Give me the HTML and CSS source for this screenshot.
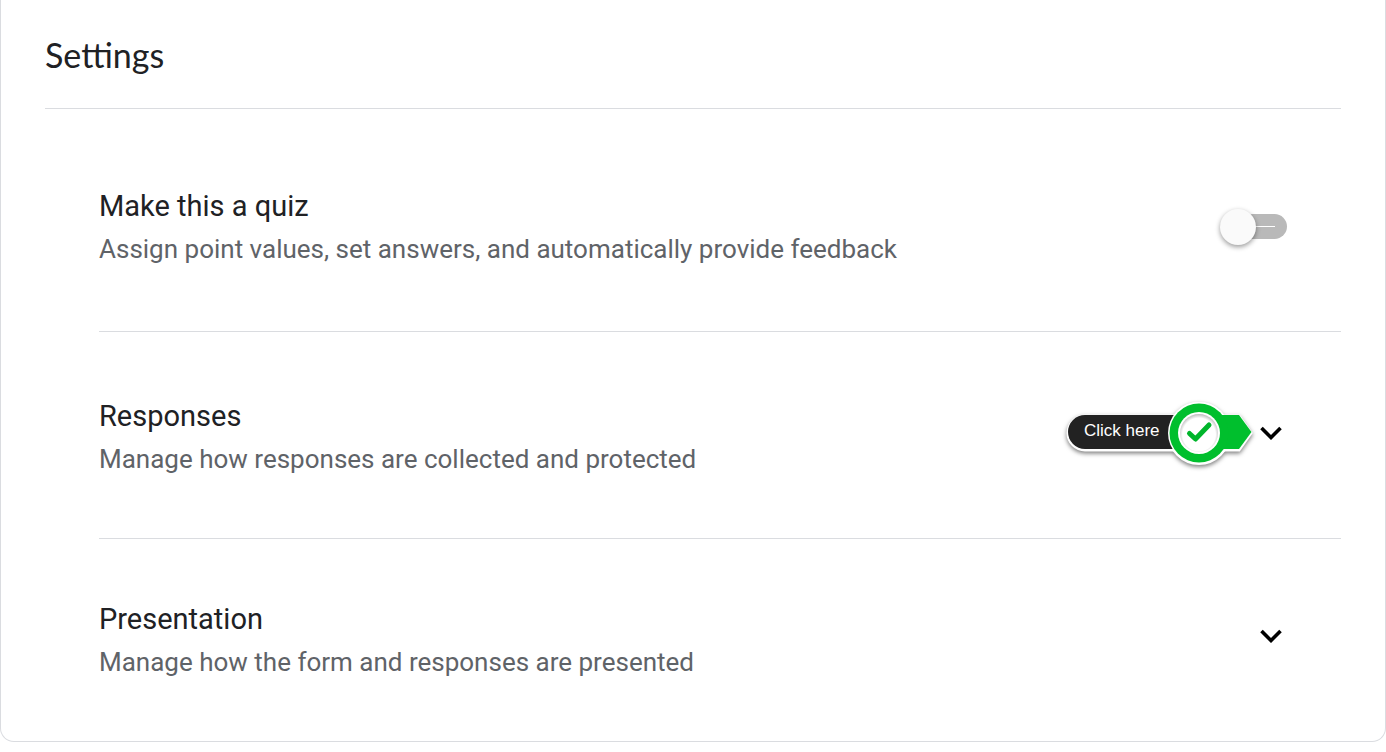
FILE: index.html
```html
<!DOCTYPE html>
<html lang="en">
<head>
<meta charset="utf-8">
<meta name="viewport" content="width=device-width, initial-scale=1">
<title>Settings</title>
<link rel="stylesheet" href="styles.css">
</head>
<body>
<main class="card">
  <header class="card-header"><h1 class="card-title">Settings</h1></header>
  <section class="setting setting-quiz">
    <div class="setting-text">
      <h2 class="setting-title"><label for="quiz">Make this a quiz</label></h2>
      <p class="setting-note" id="quiz-note">Assign point values, set answers, and automatically provide feedback</p>
    </div>
    <input class="switch" type="checkbox" role="switch" id="quiz" aria-describedby="quiz-note">
  </section>
  <section class="setting setting-responses">
    <div class="setting-text">
      <h2 class="setting-title" id="responses">Responses</h2>
      <p class="setting-note">Manage how responses are collected and protected</p>
    </div>
    <div class="expander">
      <button class="expand" type="button" aria-expanded="false" aria-labelledby="responses">
        <svg class="chevron" viewBox="0 0 22 14" aria-hidden="true"><path d="M1.500 2l9.500 9.500L20.500 2"/></svg>
      </button>
      <div class="callout">
        <svg class="callout-shape" viewBox="0 0 200 76" aria-hidden="true">
          <defs>
            <radialGradient id="disc-shade" cx="0.5" cy="0.54" r="0.54">
              <stop offset="0.8" stop-color="#fff"/>
              <stop offset="1" stop-color="#bbb"/>
            </radialGradient>
          </defs>
          <g class="callout-outline">
            <path d="M116 20H24a17 17 0 0 0 0 34h92z"/>
            <path d="M144 20h34l12 17-12 17h-34z"/>
            <circle cx="138" cy="37.5" r="30"/>
          </g>
          <path class="callout-dark" d="M116 19H24a17 17 0 0 0 0 34h92z"/>
          <circle class="callout-gap" cx="138" cy="37" r="31"/>
          <path class="callout-green" d="M144 19h34l12.500 17-12.500 17h-34z"/>
          <circle class="callout-green" cx="138" cy="37" r="29.500"/>
          <circle class="callout-disc" cx="138" cy="37" r="21"/>
          <circle cx="138" cy="37" r="19" fill="url(#disc-shade)"/>
          <path class="callout-check" d="M128.500 37.500l6 5.500 13.500-14"/>
        </svg>
        <span class="callout-label">Click here</span>
      </div>
    </div>
  </section>
  <section class="setting setting-presentation">
    <div class="setting-text">
      <h2 class="setting-title" id="presentation">Presentation</h2>
      <p class="setting-note">Manage how the form and responses are presented</p>
    </div>
    <div class="expander">
      <button class="expand" type="button" aria-expanded="false" aria-labelledby="presentation">
        <svg class="chevron" viewBox="0 0 22 14" aria-hidden="true"><path d="M1.500 2l9.500 9.500L20.500 2"/></svg>
      </button>
    </div>
  </section>
</main>
</body>
</html>
```
FILE: styles.css
```css
* { box-sizing: border-box; }
body {
  margin: 0;
  background: #fff;
  color: #202124;
  font-family: Roboto, sans-serif;
}
.card {
  border: 1px solid #dadce0;
  border-top: 0;
  border-radius: 0 0 14px 14px;
  padding: 0 44px;
}
.card-header {
  padding: 31px 0 29px;
  border-bottom: 1px solid #dadce0;
}
.card-title {
  margin: 0;
  font: 400 34px/48px Lato, sans-serif;
}
.setting {
  display: flex;
  align-items: center;
  justify-content: space-between;
  gap: 24px;
  margin-left: 54px;
  padding-right: 54px;
}
.setting + .setting { border-top: 1px solid #dadce0; }
.setting-quiz { padding-top: 76px; padding-bottom: 60px; }
.setting-responses { padding-top: 63px; padding-bottom: 57px; }
.setting-presentation { padding-top: 59px; padding-bottom: 57px; }
.setting-title, .setting-note { margin: 0; font-weight: 400; line-height: 43px; }
.setting-title { font-size: 29px; }
.setting-note { font-size: 26px; color: #5f6368; }
.switch {
  appearance: none;
  position: relative;
  flex: none;
  width: 64px;
  height: 25px;
  margin: 0 0 4px;
  border-radius: 13px;
  background: #b9b9b9;
  cursor: pointer;
}
.switch::before {
  content: "";
  position: absolute;
  top: 12px;
  right: 12px;
  width: 22px;
  height: 1px;
  background: #fff;
}
.switch::after {
  content: "";
  position: absolute;
  top: -5px;
  left: -3px;
  width: 36px;
  height: 36px;
  border-radius: 50%;
  background: #fafafa;
  box-shadow: 0 2px 5px rgba(0, 0, 0, .4);
}
.expander { position: relative; flex: none; }
.expand {
  display: grid;
  place-items: center;
  width: 32px;
  height: 32px;
  margin-bottom: 10px;
  padding: 0;
  border: 0;
  background: none;
  cursor: pointer;
}
.chevron {
  width: 22px;
  height: 14px;
  fill: none;
  stroke: #000;
  stroke-width: 3.6;
}
.callout {
  position: absolute;
  right: 26px;
  top: -21px;
  width: 200px;
  height: 76px;
  pointer-events: none;
}
.callout-shape { display: block; width: 200px; height: 76px; overflow: visible; }
.callout-outline {
  fill: #fff;
  stroke: #fff;
  stroke-width: 3;
  filter: drop-shadow(0 2px 2px rgba(0, 0, 0, .5));
}
.callout-dark { fill: #222; }
.callout-green { fill: #00bf2d; }
.callout-gap, .callout-disc { fill: #fff; }
.callout-check {
  fill: none;
  stroke: #00b52b;
  stroke-width: 5;
  stroke-linecap: round;
  stroke-linejoin: round;
}
.callout-label {
  position: absolute;
  left: 23px;
  top: 25px;
  color: #fff;
  font: 17px/20px "Liberation Sans", Arial, sans-serif;
  white-space: nowrap;
}
```
